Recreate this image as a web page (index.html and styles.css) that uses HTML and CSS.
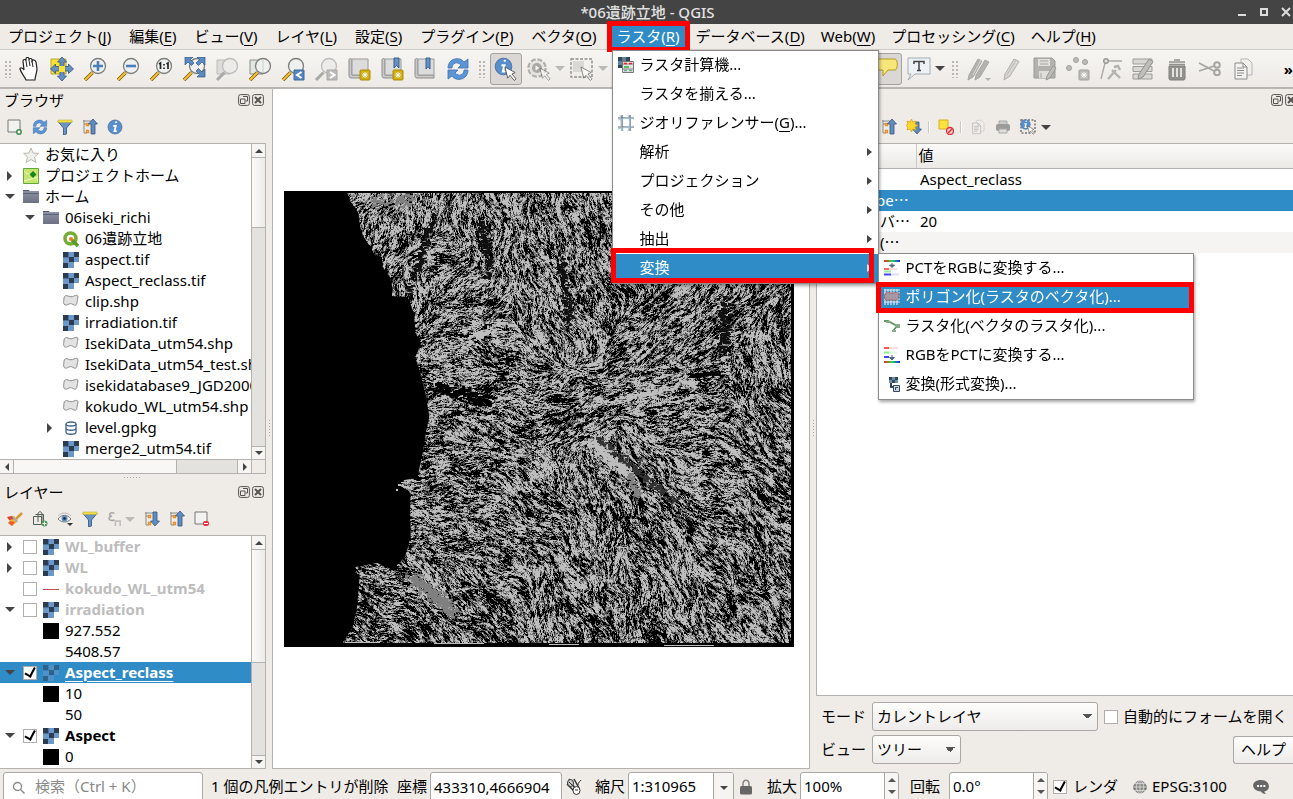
FILE: index.html
```html
<!DOCTYPE html>
<html lang="ja">
<head>
<meta charset="utf-8">
<title>*06遺跡立地 - QGIS</title>
<link rel="stylesheet" href="styles.css">
</head>
<body>
<svg class="sprite" aria-hidden="true">
  <defs>
    <linearGradient id="rainbow" x1="0" x2="1"><stop offset="0" stop-color="#f22"/><stop offset=".5" stop-color="#2d4"/><stop offset="1" stop-color="#22f"/></linearGradient>
    <linearGradient id="foldg" x1="0" y1="0" x2="0" y2="1"><stop offset="0" stop-color="#8d93a4"/><stop offset="1" stop-color="#6b7183"/></linearGradient>
  </defs>
  <symbol id="raster" viewBox="0 0 16 16"><path fill="#6c97c9" d="M0 0h16v10h-5v6H0z"/><path fill="#2b3b50" d="M0 0h5v5H0zM11 0h5v5h-5zM6 5h5v5H6zM0 11h5v5H0z"/><path fill="#4c70a0" d="M5 0h1v5H5zM0 5h6v1H0z"/></symbol>
  <symbol id="poly" viewBox="0 0 16 16"><path d="M1 4c0-2 2-3 4-2s4 1 6 0 4-1 4 1-1 3-1 5-1 4-3 3-3-2-5-1-4 2-5 0 0-3 0-6z" fill="#e2e2e2" stroke="#8c8c8c"/></symbol>
  <symbol id="folder" viewBox="0 0 16 16"><path d="M0 1h6l1 2H0z" fill="#555b6b"/><path d="M0 2h16v12H0z" fill="url(#foldg)"/><path d="M0 4.500h16" stroke="#5b6172"/></symbol>
  <symbol id="mag" viewBox="0 0 24 24"><path d="M9.500 15.500 2 23" stroke="#6e5510" stroke-width="3.400"/><path d="M9.500 15.500 2 23" stroke="#fbc02e" stroke-width="2"/><circle cx="15" cy="9" r="7.500" fill="#eef1f0" stroke="#7c7f7c" stroke-width="1.300"/></symbol>
  <symbol id="magoff" viewBox="0 0 24 24"><path d="M9.500 15.500 2 23" stroke="#a9a9a9" stroke-width="3"/><circle cx="15" cy="9" r="7.500" fill="#ecebe9" stroke="#bdbcba" stroke-width="1.300"/></symbol>
  <symbol id="refresh" viewBox="0 0 24 24"><path d="M2 11C2 1 14-1 18 5l4-3v9h-10l3-3C11 4 6 6 6 11zM22 13c0 10-12 12-16 6l-4 3v-9h10l-3 3c4 4 9 2 9-3z" fill="#5b95d6" stroke="#3b70b0" stroke-width=".8"/></symbol>
  <symbol id="funnel" viewBox="0 0 16 16"><path d="M1 2.500h14L9.500 9v6l-3 1V9z" fill="#6894c4" stroke="#41678f"/><path d="M1 1h14v2.500H1z" fill="#f2de45" stroke="#b5a53a" stroke-width=".5"/></symbol>
  <symbol id="treeup" viewBox="0 0 16 16"><path d="M2 1v13h3M2 5h3M1 2h8" stroke="#8a8a88" fill="none"/><path d="M4.500 4.500h2v2h-2zM4.500 11.500h2v2h-2z" fill="#fff" stroke="#ef8d1b" stroke-width="1.300"/><path d="m11 0 4.500 5H13v10H9V5H6.500z" fill="#5d8dc3" stroke="#35577e" stroke-width=".8"/></symbol>
  <symbol id="treedown" viewBox="0 0 16 16"><path d="M2 1v13h3M2 5h3M1 2h8" stroke="#8a8a88" fill="none"/><path d="M4.500 4.500h2v2h-2zM4.500 11.500h2v2h-2z" fill="#fff" stroke="#ef8d1b" stroke-width="1.300"/><path d="m11 15 4.500-5H13V1H9v9H6.500z" fill="#5d8dc3" stroke="#35577e" stroke-width=".8"/></symbol>
  <symbol id="info" viewBox="0 0 16 16"><circle cx="8" cy="8" r="7" fill="#5a8fcd" stroke="#44699a" stroke-width=".7"/><path d="M9 3.200h.2M7 7h1.800L7.500 12.200H9" stroke="#fff" stroke-width="1.800" stroke-linecap="round" fill="none"/></symbol>
  <symbol id="cursor" viewBox="0 0 14 16"><path d="M1 1l3 12 2.500-3 4.500 5.500 2-1.700L8.500 8.500 12 7z" fill="#fff" stroke="#555" stroke-width="1"/></symbol>
  <symbol id="float" viewBox="0 0 12 12"><rect x=".6" y=".6" width="10.800" height="10.800" rx="2" fill="none" stroke="#55534f"/><path d="M5 2.500h4.500V7H8M2.500 5H7v4.500H2.500z" fill="none" stroke="#55534f"/></symbol>
  <symbol id="close" viewBox="0 0 12 12"><rect x=".6" y=".6" width="10.800" height="10.800" rx="2" fill="none" stroke="#55534f"/><path d="m3 3 6 6m0-6-6 6" stroke="#55534f" stroke-width="2"/></symbol>
  <symbol id="star" viewBox="0 0 8 8"><path d="M4 0v8M0 4h8M1 1l6 6M7 1 1 7" stroke="#fff" stroke-width="1.300"/></symbol>
  <symbol id="scroll" viewBox="0 0 24 24"><path d="M2 3c0-2 3-2 3 0v15h16v3H4c-2 0-2-2-2-4z" fill="#c9c9c9" stroke="#8e8e8e"/><path d="M5 2h16v16H5z" fill="#dcdcdc" stroke="#9a9a9a"/></symbol>
  <symbol id="copy" viewBox="0 0 24 24"><path d="M10 2h7l4 4v12H10z" fill="#f1f0ee" stroke="#b5b5b3"/><path d="M4 6h8l4 4v12H4z" fill="#f3f2f0" stroke="#8c8c8a"/><path d="M6 11h7M6 13.500h7M6 16h7M6 18.500h5M12 6v4h4" stroke="#8c8c8a" fill="none"/></symbol>
</svg>

<header class="titlebar"><span>*06遺跡立地 - QGIS</span>
  <div class="winbtns">
    <button aria-label="最小化"><svg width="10" height="10"><path d="M1 8h8" stroke="#ddd" stroke-width="2"/></svg></button>
    <button aria-label="最大化"><svg width="10" height="10"><rect x="2" y="2" width="6" height="6" fill="none" stroke="#ddd" stroke-width="2"/></svg></button>
    <button aria-label="閉じる"><svg width="10" height="10"><path d="m1 1 8 8m0-8L1 9" stroke="#ddd" stroke-width="2"/></svg></button>
  </div>
</header>

<nav class="menubar">
  <div class="mi"><button>プロジェクト(<u>J</u>)</button></div>
  <div class="mi"><button>編集(<u>E</u>)</button></div>
  <div class="mi"><button>ビュー(<u>V</u>)</button></div>
  <div class="mi"><button>レイヤ(<u>L</u>)</button></div>
  <div class="mi"><button>設定(<u>S</u>)</button></div>
  <div class="mi"><button>プラグイン(<u>P</u>)</button></div>
  <div class="mi"><button>ベクタ(<u>O</u>)</button></div>
  <div class="mi open"><button>ラスタ(<u>R</u>)</button>
    <div class="popup main-popup">
      <button class="row"><svg class="ic" viewBox="0 0 16 16"><path fill="#31485c" d="M0 0h4v4H0zM4 4h4v4H4zM8 0h4v4H8zM0 8h4v3H0z"/><path fill="#5f8499" d="M4 0h4v4H4zM0 4h4v4H0z"/><path d="M4.500 4.500h11v11h-11z" fill="#e2e2e2" stroke="#777"/><path d="M5 7h10M5 12h10" stroke="#888"/><path d="M6 6.500h3M11 6.500h3" stroke="#e22" stroke-width="1.600"/><path d="M6 10h5" stroke="#3b3" stroke-width="1.600"/><path d="M6 13.500h3M11 13.500h3" stroke="#69a78b" stroke-width="1.500"/></svg><span>ラスタ計算機...</span></button>
      <button class="row"><i class="ic"></i><span>ラスタを揃える...</span></button>
      <button class="row"><svg class="ic" viewBox="0 0 16 16"><path d="M0 3h16M0 12h16M4 0v16M12 0v16" stroke="#5b6067" stroke-width="1.200"/><path d="M0 5c5-1 10-3 16-1M0 14c6-2 10-1 16-3M2 0c2 6 0 10 2 16M10 0c2 6 2 10 0 16" stroke="#a3c4dd" fill="none"/></svg><span>ジオリファレンサー(<u>G</u>)...</span></button>
      <button class="row"><i class="ic"></i><span>解析</span><i class="sub"></i></button>
      <button class="row"><i class="ic"></i><span>プロジェクション</span><i class="sub"></i></button>
      <button class="row"><i class="ic"></i><span>その他</span><i class="sub"></i></button>
      <button class="row"><i class="ic"></i><span>抽出</span><i class="sub"></i></button>
      <div class="subhost">
        <button class="row on mark-a"><i class="ic"></i><span>変換</span><i class="sub"></i></button>
        <div class="popup sub-popup">
          <button class="row"><svg class="ic" viewBox="0 0 16 16"><path d="M0 0h16v2H0z" fill="url(#rainbow)"/><path d="M0 8h5v2H0z" fill="#f66"/><path d="M5 8h8v2H5z" fill="#fdd"/><path d="M0 10.500h7v2H0z" fill="#9e9"/><path d="M0 13.500h7v2H0z" fill="#44f"/><path d="M7 13.500h8v2H7z" fill="#ddf"/><path d="M8 3v3M5.500 5h5L8 7.500z" stroke="#4d6c86" fill="#4d6c86"/></svg><span>PCTをRGBに変換する...</span></button>
          <button class="row on mark-b"><svg class="ic" viewBox="0 0 16 16"><path d="M1 0v16M4 0v16M7 0v16M10 0v16M13 0v16M0 1h16M0 4h16M0 7h16M0 10h16M0 13h16" stroke="#dce6ee" stroke-width="1.200"/><path d="M1 5c3-4 5 0 8-1s7-1 6 3-3 5-6 4-5 1-7 0-2-3-1-6z" fill="#a98f98" opacity=".85" stroke="#a55"/></svg><span>ポリゴン化(ラスタのベクタ化)...</span></button>
          <button class="row"><svg class="ic" viewBox="0 0 16 16"><path d="M0 3h4l9 5-4 5" fill="none" stroke="#5f9766" stroke-width="1.800"/><path d="M2 3h4v2H2zM11 6h5v4h-3zM8 12h4v2H8z" fill="#86aa8a"/></svg><span>ラスタ化(ベクタのラスタ化)...</span></button>
          <button class="row"><svg class="ic" viewBox="0 0 16 16"><path d="M0 14h16v2H0z" fill="url(#rainbow)"/><path d="M0 0h5v2H0z" fill="#f55"/><path d="M5 0h9v2H5z" fill="#fdd"/><path d="M0 4.500h5v2H0z" fill="#8e8"/><path d="M5 4.500h8v2H5z" fill="#dfd"/><path d="M0 9h5v2H0z" fill="#44f"/><path d="M8 8v3M5.500 10.500h5L8 13z" stroke="#4d6c86" fill="#4d6c86"/></svg><span>RGBをPCTに変換する...</span></button>
          <button class="row"><svg class="ic" viewBox="0 0 16 16"><path d="M5 1h9v6H5z" fill="#7390a3"/><path d="M5 1h3v3H5zM11 1h3v3h-3zM8 4h3v3H8z" fill="#31485c"/><path d="M7 7v4h3" stroke="#31485c" fill="none" stroke-width="2"/><path d="M9.500 9.500h6v6h-6z" fill="#cbd6dc" stroke="#31485c"/><path d="M11.500 14v-2.500H14" stroke="#31485c" fill="none"/></svg><span>変換(形式変換)...</span></button>
        </div>
      </div>
    </div>
  </div>
  <div class="mi"><button>データベース(<u>D</u>)</button></div>
  <div class="mi"><button>Web(<u>W</u>)</button></div>
  <div class="mi"><button>プロセッシング(<u>C</u>)</button></div>
  <div class="mi"><button>ヘルプ(<u>H</u>)</button></div>
</nav>

<div class="toolbar">
  <i class="handle"></i>
  <button class="tool"><svg viewBox="0 0 24 24"><path d="M9 23c-1-3-5-7-6-11 0-2 3-1 4 1L6 4c0-2 3-2 3 0V2c0-2 3-2 3 0v1c0-2 3-2 3 0v1c1-1.500 3-1.500 4 1l1 7c0 4-2 7-2 11z" fill="#fff" stroke="#222" stroke-width="1.200"/><path d="m9 4 1 6M12 3l1 6M15 4l1 6" stroke="#222"/></svg></button>
  <button class="tool"><svg viewBox="0 0 24 24"><path d="M1 2h15v15H1z" fill="#f9e32f" stroke="#b8a636"/><path d="m12 0 4.500 5H14v4.500h4.500V7L23.500 12 18.500 16.500V14H14v5h2.500L12 24l-4.500-5H10v-5H5.500v2.500L.5 12l5-5v2.500H10V5H7.500z" fill="#6490c4" stroke="#35577e" stroke-width=".8"/><path d="M9 9h6v6H9z" fill="#f9e32f"/></svg></button>
  <button class="tool"><svg viewBox="0 0 24 24"><use href="#mag"/><path d="M15 4v10M10 9h10" stroke="#4b7fbd" stroke-width="2.600"/></svg></button>
  <button class="tool"><svg viewBox="0 0 24 24"><use href="#mag"/><path d="M10 9h10" stroke="#4b7fbd" stroke-width="2.600"/></svg></button>
  <button class="tool"><svg viewBox="0 0 24 24"><use href="#mag"/><path d="m10 7 1.500-1V12M15 7v1.500M15 10.500V12M17.500 7 19 6V12" stroke="#222" stroke-width="1.700" fill="none"/></svg></button>
  <button class="tool"><svg viewBox="0 0 24 24"><use href="#mag"/><path d="M3 0h8L8.500 2.500 12 6 9.500 8.500 6 5 3 8zM23 0v8l-3-3-3.500 3.500L14 6l3.500-3.500L15 0zM23 20h-8l2.500-2.500L14 14l2.500-2.500L20 15l3-3z" fill="#5a8ac0" stroke="#35577e" stroke-width=".7"/></svg></button>
  <button class="tool"><svg viewBox="0 0 24 24"><path d="M2 3h13v14H2z" fill="#dddcda" stroke="#bbb"/><use href="#magoff"/></svg></button>
  <button class="tool"><svg viewBox="0 0 24 24"><path d="M2 3h13v14H2z" fill="#e2e6e2" stroke="#899189"/><use href="#mag"/><path d="M15 2v14" stroke="#c9cfca"/></svg></button>
  <button class="tool"><svg viewBox="0 0 24 24"><use href="#mag"/><path d="M13 13h10v10H13z" fill="#5787bf" stroke="#3f6998"/><path d="m20.500 15-4.500 3 4.500 3" stroke="#fff" stroke-width="2" fill="none"/></svg></button>
  <button class="tool"><svg viewBox="0 0 24 24"><use href="#magoff"/><path d="M13 13h10v10H13z" fill="#bdbcba" stroke="#a8a7a5"/><path d="m16 15 4.500 3-4.500 3" stroke="#fff" stroke-width="2" fill="none"/></svg></button>
  <button class="tool"><svg viewBox="0 0 24 24"><use href="#scroll"/><rect x="13" y="13" width="10" height="10" rx="1" fill="#d2ae10" stroke="#a98b08"/><use href="#star" x="15" y="15" width="6" height="6"/></svg></button>
  <button class="tool"><svg viewBox="0 0 24 24"><use href="#scroll"/><path d="M14 1h5v10l-2.500-2.500L14 11z" fill="#6592c7" stroke="#3a5e8b"/><rect x="13" y="13" width="10" height="10" rx="1" fill="#d2ae10" stroke="#a98b08"/><use href="#star" x="15" y="15" width="6" height="6"/></svg></button>
  <button class="tool"><svg viewBox="0 0 24 24"><use href="#scroll"/><path d="M13 1h4v11l-2-2.500-2 2.500z" fill="#6592c7" stroke="#3a5e8b"/></svg></button>
  <button class="tool"><svg viewBox="0 0 24 24"><use href="#refresh"/></svg></button>
  <i class="handle"></i>
  <button class="tool pressed"><svg viewBox="0 0 24 24"><use href="#info" x="0" y="0" width="19" height="19"/><use href="#cursor" x="10" y="9" width="13" height="15"/></svg></button>
  <button class="tool"><svg viewBox="0 0 24 24"><circle cx="10" cy="11" r="8.500" fill="none" stroke="#b2b0ad" stroke-width="2.500" stroke-dasharray="5 1.700"/><circle cx="10" cy="11" r="7.500" fill="#e6e4e1"/><circle cx="10" cy="11" r="5" fill="#aaa8a5"/><path d="m8.500 8.500 4 2.500-4 2.500z" fill="#fff"/><use href="#cursor" x="12" y="10" width="12" height="14" opacity=".6"/></svg></button><i class="drop off"></i>
  <button class="tool"><svg viewBox="0 0 24 24"><path d="M1 2h21v18H1z" fill="none" stroke="#908e8b" stroke-width="1.400" stroke-dasharray="3 1.500"/><path d="M3 4h11v11H3z" fill="#d9d8d5"/><use href="#cursor" x="10" y="9" width="13" height="15" opacity=".7"/></svg></button><i class="drop off"></i>
  <div class="right-tools">
    <button class="tool pressed"><svg viewBox="0 0 24 24"><path d="M3 2h18c3 0 3 11 0 11h-7l-5 6v-6H3z" fill="#f9e67a" stroke="#b39a20"/></svg></button>
    <button class="tool"><svg viewBox="0 0 24 24"><path d="M1 1h22v16H8l-7 6 3-6H1z" fill="#edf2f6" stroke="#a1abb3"/><path d="M7 7V4.500h10V7M12 4.500v9M10 13.500h4" stroke="#444" stroke-width="1.500" fill="none"/></svg></button><i class="drop"></i>
    <i class="handle"></i>
    <button class="tool off"><svg viewBox="0 0 24 24"><path d="m2 18 9-16 4 2-9 16-5 3zM9 18l9-15 4 2-9 15-5 3z" fill="#aaa8a5" stroke="#a09e9b"/><path d="m6 18 8-15" stroke="#d5d3d0"/><path d="M18 21h6l-3 3z" fill="#aaa"/></svg></button>
    <button class="tool off"><svg viewBox="0 0 24 24"><path d="m5 17 9-15 5 2.500L10 19l-6 4z" fill="#d4d2cf" stroke="#a7a5a2"/><path d="m7 18 9-15" stroke="#b7b5b2"/></svg></button>
    <button class="tool off"><svg viewBox="0 0 24 24"><path d="M1 1h18l3 3v17H1z" fill="#aaa8a5" stroke="#8e8c89"/><path d="M5 2h12v7H5zM6 14h11v7H6z" fill="#dedcd9"/><path d="M7 4h8M7 7h8M8 16v5" stroke="#999"/><path d="m14 19 6-10 3 2-6 10-4 2z" fill="#b7b5b2" stroke="#8e8c89"/></svg></button>
    <button class="tool off"><svg viewBox="0 0 24 24"><g fill="#b5b3b0" stroke="#93918e"><circle cx="10" cy="3" r="2.500"/><circle cx="19" cy="5" r="2.500"/><circle cx="3" cy="11" r="2.500"/><rect x="13" y="13" width="10" height="10" rx="1"/></g><use href="#star" x="15" y="15" width="6" height="6"/></svg></button>
    <button class="tool off"><svg viewBox="0 0 24 24"><path d="M7 4h16M6 6 2 22" stroke="#a09e9b" stroke-width="1.400"/><circle cx="7" cy="4" r="2.300" fill="#ddd" stroke="#8d8b88" stroke-width="1.500"/><path d="m9 22 8-9M13 13l8 8M15 10l4-1 2 4" stroke="#aaa8a5" stroke-width="2.400" fill="none"/></svg></button>
    <button class="tool off"><svg viewBox="0 0 24 24"><path d="M1 2h19v5H1zM1 9.500h19v5H1zM1 17h19v5H1z" fill="#d5d3d0" stroke="#918f8c"/><path d="m7 17 10-15 4 2.500L11 20l-5 2z" fill="#b8b6b3" stroke="#858380"/></svg></button>
    <button class="tool"><svg viewBox="0 0 24 24"><path d="M4 9h16v12c0 2-1 2-2 2H6c-1 0-2 0-2-2z" fill="#93918e" stroke="#807e7b"/><path d="M4 5h16M4 7.500h16M9 3h6" stroke="#93918e" stroke-width="1.400"/><path d="M8 11v9M12 11v9M16 11v9" stroke="#e3e1de" stroke-width="2"/></svg></button>
    <button class="tool off"><svg viewBox="0 0 24 24"><path d="m1 6 15 8M1 14l15-5" stroke="#9b9996" stroke-width="1.800"/><circle cx="19" cy="8" r="2.800" fill="none" stroke="#9b9996" stroke-width="2"/><circle cx="19" cy="15.500" r="2.800" fill="none" stroke="#9b9996" stroke-width="2"/></svg></button>
    <button class="tool"><svg viewBox="0 0 24 24"><use href="#copy"/></svg></button>
    <button class="more">»</button>
  </div>
</div>

<main class="work">
  <aside class="left">
    <section class="dock browser">
      <div class="dock-title"><h2>ブラウザ</h2><svg width="12" height="12"><use href="#float"/></svg><svg width="12" height="12"><use href="#close"/></svg></div>
      <div class="dock-tools">
        <button><svg viewBox="0 0 16 16"><path d="M1 1h12v12H1z" fill="#f2f2f0" stroke="#777"/><circle cx="12" cy="13" r="2.200" fill="#fff" stroke="#3d8d4e" stroke-width="1.500"/></svg></button>
        <button><svg viewBox="0 0 24 24"><use href="#refresh"/></svg></button>
        <button><svg><use href="#funnel"/></svg></button>
        <button><svg><use href="#treeup"/></svg></button>
        <button><svg><use href="#info"/></svg></button>
      </div>
      <div class="view">
        <div class="view-row">
        <ul class="tree">
          <li><i class="tw"></i><svg><path d="m8 1 2 5 5.500.3-4 3.700 1.500 5.500-5-3-5 3L4.500 10 .5 6.300 6 6z" fill="#f0f0ea" stroke="#b9b9ae"/></svg>お気に入り</li>
          <li><i class="tw shut"></i><svg><path d="M.5.500h15v15H.5z" fill="#c6e56e" stroke="#63a63a"/><path d="M1 3c4 5 10 2 14 10M1 13 15 9" stroke="#effbc0" fill="none"/><path d="m10 3 3.500 3.500L10 10 6.500 6.500z" fill="#15851a"/></svg>プロジェクトホーム</li>
          <li><i class="tw down"></i><svg><use href="#folder"/></svg>ホーム</li>
          <li class="l1"><i class="tw down"></i><svg><use href="#folder"/></svg>06iseki_richi</li>
          <li class="l2"><i class="tw"></i><svg><circle cx="7.500" cy="7.500" r="5.500" fill="#fff" stroke="#76ac36" stroke-width="3.500"/><path d="m9 9 6 6" stroke="#5c9b2a" stroke-width="3.500"/><circle cx="8" cy="8" r="2" fill="#ee7913"/></svg>06遺跡立地</li>
          <li class="l2"><i class="tw"></i><svg><use href="#raster"/></svg>aspect.tif</li>
          <li class="l2"><i class="tw"></i><svg><use href="#raster"/></svg>Aspect_reclass.tif</li>
          <li class="l2"><i class="tw"></i><svg><use href="#poly"/></svg>clip.shp</li>
          <li class="l2"><i class="tw"></i><svg><use href="#raster"/></svg>irradiation.tif</li>
          <li class="l2"><i class="tw"></i><svg><use href="#poly"/></svg>IsekiData_utm54.shp</li>
          <li class="l2"><i class="tw"></i><svg><use href="#poly"/></svg>IsekiData_utm54_test.shp</li>
          <li class="l2"><i class="tw"></i><svg><use href="#poly"/></svg>isekidatabase9_JGD2000</li>
          <li class="l2"><i class="tw"></i><svg><use href="#poly"/></svg>kokudo_WL_utm54.shp</li>
          <li class="l2"><i class="tw shut"></i><svg><path d="M3 4v8c0 3 10 3 10 0V4M3 8c0 3 10 3 10 0" fill="#fff" stroke="#3f6386" stroke-width="1.300"/><ellipse cx="8" cy="4" rx="5" ry="2" fill="#fff" stroke="#3f6386" stroke-width="1.300"/></svg>level.gpkg</li>
          <li class="l2"><i class="tw"></i><svg><use href="#raster"/></svg>merge2_utm54.tif</li>
        </ul>
        <div class="sb"><i class="cap up"></i><i class="thumb t1"></i><i class="track"></i><i class="cap dn"></i></div>
        </div>
        <div class="hsb"><i class="cap lf"></i><i class="thumb"></i><i class="track"></i><i class="cap rt"></i><i class="corner"></i></div>
      </div>
    </section>
    <div class="split-h"><i></i></div>
    <section class="dock layers">
      <div class="dock-title"><h2>レイヤー</h2><svg width="12" height="12"><use href="#float"/></svg><svg width="12" height="12"><use href="#close"/></svg></div>
      <div class="dock-tools">
        <button><svg viewBox="0 0 16 16"><path d="m1 6 6-1 4 5-6 5z" fill="#f4b32a"/><path d="m0 6 5-1 2 3-5 1z" fill="#d94330"/><path d="m3 10 5 1-3 4-4-3z" fill="#ef5b2f"/><path d="m9 8 6-6" stroke="#d29a35" stroke-width="2.500"/><path d="m6 6 4 5" stroke="#83b4df" stroke-width="1.500"/></svg></button>
        <button><svg viewBox="0 0 16 16"><path d="M1.500 5.500h8v8h-8zM3.500 3.500h8v8M6 11V3c0-3 4-3 4 0v9" fill="none" stroke="#555e55"/><circle cx="12.500" cy="12.500" r="3" fill="#489a58"/><path d="M10.500 12.500h4M12.500 10.500v4" stroke="#fff"/></svg></button>
        <button><svg viewBox="0 0 16 16"><path d="M1 8c4-5 9-5 13 0-4 4-9 4-13 0z" fill="#f6f6f6" stroke="#777"/><circle cx="7.500" cy="7.500" r="3" fill="#5a8ac0"/><circle cx="7.500" cy="7.500" r="1.300" fill="#223"/><path d="M1 5c4-4 9-4 13 0" stroke="#bbb" fill="none"/><path d="M10 12h6l-3 3z" fill="#333"/></svg></button>
        <button><svg><use href="#funnel"/></svg></button>
        <button class="wide"><svg viewBox="0 0 16 16"><path d="M8 2C3 0 1 4 5 5 0 6 2 11 8 9" stroke="#a9a7a4" stroke-width="1.700" fill="none"/><path d="M9 14v-4h5v4M9 12.500v3M14 12.500v3" stroke="#bdbbb8" stroke-width="1.600" fill="none"/></svg><i class="drop off"></i></button>
        <button><svg><use href="#treedown"/></svg></button>
        <button><svg><use href="#treeup"/></svg></button>
        <button><svg viewBox="0 0 16 16"><path d="M1 1h12v12H1z" fill="#f2f2f0" stroke="#777"/><rect x="9" y="10" width="6" height="5" rx="2" fill="#e4343f"/><path d="M10 12.500h4" stroke="#fff"/></svg></button>
      </div>
      <div class="view">
        <div class="view-row">
        <ul class="tree lay">
          <li class="dim"><i class="tw shut"></i><label><input type="checkbox"><svg><use href="#raster"/></svg>WL_buffer</label></li>
          <li class="dim"><i class="tw shut"></i><label><input type="checkbox"><svg><use href="#raster"/></svg>WL</label></li>
          <li class="dim"><i class="tw"></i><label><input type="checkbox"><svg><path d="M0 8.500h16" stroke="#c0504d"/></svg>kokudo_WL_utm54</label></li>
          <li class="dim"><i class="tw down"></i><label><input type="checkbox"><svg><use href="#raster"/></svg>irradiation</label></li>
          <li class="val"><b class="sw"></b>927.552</li>
          <li class="val"><b class="sw none"></b>5408.57</li>
          <li class="sel"><i class="tw down"></i><label><input type="checkbox" checked><svg class="fade"><use href="#raster"/></svg><u>Aspect_reclass</u></label></li>
          <li class="val"><b class="sw"></b>10</li>
          <li class="val"><b class="sw none"></b>50</li>
          <li class="strong"><i class="tw down"></i><label><input type="checkbox" checked><svg><use href="#raster"/></svg>Aspect</label></li>
          <li class="val"><b class="sw"></b>0</li>
        </ul>
        <div class="sb"><i class="cap up"></i><i class="thumb t2"></i><i class="track"></i><i class="cap dn"></i></div>
        </div>
      </div>
    </section>
  </aside>
  <div class="split-v"><i></i></div>
  <section class="map"><canvas id="terrain" width="510" height="456"></canvas></section>
  <div class="split-v"><i></i></div>
  <aside class="right">
    <div class="dock-title"><h2></h2><svg width="12" height="12"><use href="#float"/></svg><svg width="12" height="12"><use href="#close"/></svg></div>
    <div class="dock-tools id-tools">
      <button><svg><use href="#treeup"/></svg></button>
      <button><svg viewBox="0 0 16 16"><path d="m11 15 4.500-5H13V3H9v7H6.500z" fill="#5d8dc3" stroke="#35577e" stroke-width=".8"/><path d="m5.500 0 1.300 3L10 2 9 5l3 1.500L9 8l1 3-3.200-1-1.300 3-1.300-3L1 11l1-3-2-1.500L2 5 1 2l3.200 1z" fill="#fcd72c" stroke="#d79d12" stroke-width=".7"/></svg></button>
      <i class="sep"></i>
      <button><svg viewBox="0 0 16 16"><path d="M1 1h9v9H1z" fill="#fbe33b" stroke="#d0ae26"/><circle cx="12" cy="12" r="3.500" fill="#f7c9ca" stroke="#d9333f" stroke-width="1.300"/><path d="m10 14 4-4" stroke="#d9333f" stroke-width="1.500"/></svg></button>
      <i class="sep"></i>
      <button class="pale"><svg viewBox="0 0 24 24"><use href="#copy"/></svg></button>
      <button><svg viewBox="0 0 16 16"><path d="M4 2h8v4H4z" fill="#ccc" stroke="#aaa"/><rect x="1" y="5" width="14" height="7" rx="2" fill="#9d9b98"/><path d="M4 10h8v4H4z" fill="#deddda" stroke="#aaa"/></svg></button>
      <button><svg viewBox="0 0 16 16"><path d="M1 1h14v13H1z" fill="none" stroke="#777" stroke-dasharray="2 1.500" stroke-width="1.500"/><use href="#info" width="11" height="11"/><use href="#cursor" x="7" y="6" width="8" height="10"/></svg></button>
      <i class="drop"></i>
    </div>
    <div class="results">
      <table>
        <thead><tr><th></th><th>値</th></tr></thead>
        <tbody>
          <tr><td></td><td>Aspect_reclass</td></tr>
          <tr class="sel"><td>pe⋯</td><td></td></tr>
          <tr><td>バ⋯</td><td>20</td></tr>
          <tr class="alt"><td>(⋯</td><td></td></tr>
        </tbody>
      </table>
    </div>
    <div class="form">
      <label for="mode">モード</label>
      <select id="mode" class="wide-select"><option>カレントレイヤ</option></select>
      <label class="auto"><input type="checkbox">自動的にフォームを開く</label>
    </div>
    <div class="form last">
      <label for="viewsel">ビュー</label>
      <select id="viewsel"><option>ツリー</option></select>
      <button class="help">ヘルプ</button>
    </div>
  </aside>
</main>

<footer class="status">
  <div class="search"><svg width="14" height="14"><circle cx="5.500" cy="5.500" r="4" fill="none" stroke="#888" stroke-width="1.300"/><path d="m8.500 8.500 4 4" stroke="#888" stroke-width="1.500"/></svg><input type="text" aria-label="検索" placeholder="検索（Ctrl + K）"></div>
  <span class="msg">1 個の凡例エントリが削除</span>
  <label for="coord">座標</label><input id="coord" class="coord" type="text" value="433310,4666904">
  <button class="mouse" aria-label="範囲"><svg width="16" height="18" viewBox="0 0 16 18"><path d="m3 1 9 14M1 6l9 9M8 1l5 9" stroke="#333" stroke-width="1.500"/><ellipse cx="10.500" cy="12.500" rx="3.500" ry="4" fill="#fff" stroke="#333"/><ellipse cx="4.500" cy="5" rx="3" ry="3.500" fill="#ccc" stroke="#333"/><path d="M12 7c0-3 2-3 3-5M3 4l3 3M9 12h3" stroke="#333" fill="none"/></svg></button>
  <label for="scale">縮尺</label>
  <div class="combo"><input id="scale" type="text" value="1:310965"><button aria-label="縮尺一覧"><i class="drop"></i></button></div>
  <button class="lock" aria-label="縮尺を固定"><svg width="12" height="16"><path d="M3 8V5c0-5 6-5 6 0v3" fill="none" stroke="#888" stroke-width="1.500"/><rect y="7" width="12" height="8.500" rx="1.500" fill="#666"/></svg></button>
  <label for="zoom">拡大</label>
  <div class="spin"><input id="zoom" type="text" value="100%"><span class="steps"><i class="s-up"></i><i class="s-dn"></i></span></div>
  <label for="rot">回転</label>
  <div class="spin"><input id="rot" type="text" value="0.0°"><span class="steps"><i class="s-up"></i><i class="s-dn"></i></span></div>
  <label class="render"><input type="checkbox" checked>レンダ</label>
  <button class="crs"><svg width="16" height="16"><path d="M8 1 15 7v3l-7 5-7-5V7z" fill="#8b8b89"/><circle cx="8" cy="8" r="6" fill="none" stroke="#777"/><path d="M1 8h14M3 4.500h10M3 11.500h10M8 1v14M8 1C3 5 3 11 8 15M8 1c5 4 5 10 0 14" stroke="#ddd" stroke-width=".8" fill="none"/></svg>EPSG:3100</button>
  <button class="bubble" aria-label="メッセージ"><svg width="16" height="16"><path d="M8 1c10 0 10 11 3 11.500L13 15c-3 0-4-1-5-2.500C-2.500 12-2.500 1 8 1z" fill="#666"/><path d="M4 7h2M7.200 7h2M10.400 7h2" stroke="#fff" stroke-width="2"/></svg></button>
</footer>
<script src="terrain.js"></script>
</body>
</html>
```
FILE: styles.css
```css
* { box-sizing: border-box; }
html, body { height: 100%; }
body { margin: 0; display: flex; flex-direction: column; overflow: hidden; background: #efebe7; color: #000; font: 15px/21px "Noto Sans", "Noto Sans CJK JP", sans-serif; }
button, input, select { font: inherit; color: inherit; margin: 0; }
button { background: none; border: 0; padding: 0; white-space: nowrap; }
i { font-style: normal; }
u { text-decoration-thickness: 1px; text-underline-offset: 3px; }
.sprite { position: absolute; width: 0; height: 0; }

.titlebar { flex: none; height: 24px; display: flex; align-items: center; background: #444; color: #e2e2e2; font-weight: 500; padding-right: 2px; }
.titlebar > span { flex: 1; text-align: center; padding-left: 58px; }
.winbtns { display: flex; gap: 12px; }
.winbtns button, .winbtns svg { display: block; }

.menubar { flex: none; height: 26px; display: flex; align-items: center; padding-left: 1px; border-bottom: 1px solid #cfccc8; }
.mi { position: relative; white-space: nowrap; margin-right: 4px; }
.mi > button { height: 21px; line-height: 21px; padding: 0 7px; display: block; }
.mi.open { z-index: 10; margin-right: 0; }
.mi.open ~ .mi { margin-right: 2px; }
.mi.open > button { background: #308cc6; color: #fff; padding: 0 5px; outline: 5px solid #f00; margin: 0 4px; }
.popup { position: absolute; background: #fff; border: 1px solid #8e8c8a; box-shadow: 1px 2px 3px rgba(0,0,0,.35); }
.main-popup { top: 24px; left: 4px; width: 267px; }
.row { width: 100%; height: 29px; display: flex; align-items: center; gap: 6px; padding: 0 6px 2px 5px; text-align: left; position: relative; line-height: 27px; }
.row .ic { width: 16px; height: 16px; flex: none; }
.row span { flex: 1; }
.row.on { background: #308cc6; color: #fff; }
.sub { border: 4px solid transparent; border-left: 5px solid #444; border-right: 0; }
.on .sub { border-left-color: #d6e6f2; }
.subhost { position: relative; }
.sub-popup { left: 265px; top: -1px; width: 316px; }
.row.on::after { content: ""; position: absolute; border: 5px solid #f00; z-index: 3; }
.row.mark-a::after { inset: -6px 4px 0 -2px; }
.row.mark-b::after { inset: -1px -1px -1px -3px; }

.toolbar { flex: none; height: 39px; display: flex; align-items: center; gap: 1px; padding-left: 4px; border-bottom: 2px solid #b8b5b2; background: linear-gradient(#f7f5f2, #edeae6); }
.handle { width: 8px; height: 18px; flex: none; background: radial-gradient(circle, #bbb8b4 1px, transparent 1px) 0 0 / 4px 4px; }
.tool + .handle { margin: 0 3px 0 3px; }
.drop + .handle { margin: 0 3px 0 5px; }
.tool { width: 32px; height: 32px; flex: none; display: flex; align-items: center; justify-content: center; border-radius: 3px; }
.tool svg { width: 24px; height: 24px; }
.pressed { background: #dad7d4; border: 1px solid #a5a29f; }
.drop { flex: none; border: 5px solid transparent; border-top: 5px solid #444; border-bottom: 0; width: 10px; }
.drop.off { border-top-color: #bbb9b6; }
.tool.off { opacity: .85; }
.tool + .drop { margin-left: -1px; }
.right-tools { margin-left: auto; display: flex; align-items: center; gap: 1px; }
.more { margin-left: 24px; font-weight: 700; height: 24px; line-height: 20px; }

.work { flex: 1; min-height: 0; display: flex; }
.left { flex: none; width: 266px; display: flex; flex-direction: column; }
.dock-title { height: 22px; flex: none; display: flex; align-items: center; gap: 2px; padding: 0 2px 0 4px; }
.dock-title h2 { margin: 0; flex: 1; font-size: 15px; font-weight: 400; }
.dock-tools { height: 32px; flex: none; display: flex; align-items: center; gap: 9px; padding-left: 7px; }
.dock-tools button, .dock-tools svg { display: block; width: 16px; height: 16px; }
.dock-tools .wide { display: flex; width: 28px; gap: 3px; align-items: center; }
.dock-tools .drop { width: 10px; }
.browser { flex: none; }
.view { border: 1px solid #b4b1ae; border-left: 0; background: #fff; display: flex; flex-direction: column; overflow: hidden; }
.view-row { display: flex; flex: 1; min-height: 0; }
.tree { list-style: none; margin: 0; padding: 0; flex: 1; min-width: 0; overflow: hidden; }
.tree li { height: 21px; display: flex; align-items: center; white-space: nowrap; padding-left: 3px; }
.tree svg { width: 16px; height: 16px; flex: none; margin-right: 6px; }
.tree .tw { width: 20px; flex: none; height: 10px; display: flex; align-items: center; }
.tw.shut::before { content: ""; margin-left: 4px; border: 5px solid transparent; border-left: 5px solid #444; border-right: 0; }
.tw.down::before { content: ""; margin-left: 2px; border: 5px solid transparent; border-top: 5px solid #444; border-bottom: 0; }
.tree li.l1 { padding-left: 23px; }
.tree li.l2 { padding-left: 43px; }
.tree label { display: flex; align-items: center; }
input[type=checkbox] { appearance: none; width: 14px; height: 14px; flex: none; background: #fff; border: 1px solid #b1aeab; display: grid; place-items: center; }
input[type=checkbox]:checked::before { content: ""; width: 5px; height: 9px; border: solid #000; border-width: 0 2px 2px 0; transform: rotate(28deg) translate(-1px, -1px); }
.tree input { margin: 0 6px 0 0; }
.dim { color: #bdbdbd; font-weight: 700; }
.strong { font-weight: 700; }
.tree .sel { background: #308cc6; color: #fff; font-weight: 700; }
.fade { opacity: .5; }
.tree li.val { padding-left: 43px; }
.sw { width: 16px; height: 16px; background: #000; margin-right: 6px; flex: none; }
.sw.none { background: none; }
.sb { width: 14px; flex: none; border-left: 1px solid #b4b1ae; display: flex; flex-direction: column; }
.cap { flex: none; width: 13px; height: 13px; display: grid; place-items: center; background: #f6f5f3; }
.cap::before { content: ""; border: 4px solid transparent; }
.up::before { border-bottom: 4px solid #444; border-top: 0; }
.dn::before { border-top: 4px solid #444; border-bottom: 0; }
.lf::before { border-right: 4px solid #444; border-left: 0; }
.rt::before { border-left: 4px solid #444; border-right: 0; }
.thumb { background: linear-gradient(90deg, #fbfaf9, #eeecea); border: 0 solid #b4b1ae; }
.track { background: #e3e2df; flex: 1; }
.sb .thumb { border-width: 1px 0; }
.t1 { height: 71px; }
.t2 { height: 114px; }
.sb .dn { border-top: 1px solid #b4b1ae; }
.hsb { height: 14px; flex: none; border-top: 1px solid #b4b1ae; display: flex; }
.hsb .thumb { border-width: 0 1px; width: 164px; background: #f8f7f5; }
.hsb .rt, .hsb .corner { border-left: 1px solid #b4b1ae; width: 14px; }
.hsb .corner { background: #efebe7; }
.split-h { height: 7px; flex: none; display: grid; place-items: center; }
.split-h i { width: 18px; height: 1px; background: repeating-linear-gradient(90deg, #aaa 0 1px, transparent 1px 3px); }
.layers { flex: 1; min-height: 0; display: flex; flex-direction: column; }
.layers .view { flex: 1; min-height: 0; }
.split-v { width: 6px; flex: none; display: grid; place-items: center; }
.split-v i { height: 18px; width: 1px; background: repeating-linear-gradient(#aaa 0 1px, transparent 1px 3px); }
.map { flex: 1; min-width: 0; background: #fff; border: 1px solid #b4b1ae; border-top: 0; padding: 102px 15px 0 11px; }
.map canvas { display: block; width: 100%; }

.right { flex: none; width: 477px; display: flex; flex-direction: column; }
.right > .dock-title { padding-right: 0; margin-right: -4px; }
.id-tools { padding-left: 65px; }
.id-tools .drop { margin-left: -4px; }
.sep { width: 2px; height: 12px; margin: 0 -3px; border-left: 1px solid #c9c6c3; border-right: 1px solid #fff; }
.id-tools .sep + button { margin-left: 2px; }
.pale { opacity: .6; }
.results { flex: 1; min-height: 0; background: #fff; border: 1px solid #b4b1ae; border-right: 0; }
table { width: 100%; border-collapse: collapse; table-layout: fixed; }
th { height: 24px; padding: 0 2px; font-weight: 400; text-align: left; background: linear-gradient(#fbfaf8, #ebe9e6); border-bottom: 1px solid #b4b1ae; }
th:first-child { width: 99px; border-right: 1px solid #ccc9c5; }
td { height: 21px; padding: 0 4px; white-space: nowrap; }
td:first-child { padding: 0 0 0 63px; }
.right .sel { background: #308cc6; color: #fff; }
.right .sel td:first-child { padding-left: 59px; }
.alt { background: #f5f4f2; }
.form { flex: none; display: flex; align-items: center; padding: 6px 0 0 5px; gap: 6px; }
.form label:first-child { width: 45px; }
.form.last { padding: 4px 0 5px 5px; }
select { appearance: none; height: 29px; width: 89px; padding: 0 4px; border: 1px solid #aaa7a4; border-radius: 3px; background: linear-gradient(225deg, transparent 50%, #555 50%) right 10px center / 5px 5px no-repeat, linear-gradient(135deg, transparent 50%, #555 50%) right 5px center / 5px 5px no-repeat, linear-gradient(#fdfdfc, #eeecea); background: linear-gradient(45deg, transparent 50%, #555 50%) right 10px center / 5px 5px no-repeat, linear-gradient(315deg, transparent 50%, #555 50%) right 5px center / 5px 5px no-repeat, linear-gradient(#fdfdfc, #eeecea); }
.wide-select { width: 226px; }
.auto { display: flex; align-items: center; gap: 5px; white-space: nowrap; }
.help { margin-left: auto; height: 28px; padding: 0 7px; border: 1px solid #aaa7a4; border-right: 0; border-radius: 3px 0 0 3px; background: linear-gradient(#fdfdfc, #eeecea); }

.status { flex: none; height: 30px; padding: 3px 0 0 3px; display: flex; align-items: flex-start; overflow: hidden; line-height: 29px; white-space: nowrap; }
.status svg { display: block; }
.status > button { height: 29px; display: flex; align-items: center; }
.search, .combo, .spin, .coord { height: 31px; display: flex; border: 1px solid #aaa7a4; border-radius: 3px; background: #fff; overflow: hidden; flex: none; }
.search { width: 200px; align-items: center; padding-left: 8px; gap: 6px; }
.status input[type=text] { border-width: 0; background: transparent; padding: 0 3px 2px; min-width: 0; }
.search input { flex: 1; }
.search input::placeholder { color: #888; opacity: 1; }
.status input.coord { border: 1px solid #aaa7a4; background: #fff; width: 132px; }
.msg { width: 186px; margin: 0 0 0 8px; overflow: hidden; }
.status label { width: 33px; }
.mouse { width: 33px; padding-left: 4px; }
.combo { width: 106px; }
.combo input { flex: 1; }
.combo button { width: 20px; border-left: 1px solid #aaa7a4; display: grid; place-items: center; background: #f5f4f2; }
.combo .drop { border-width: 4px 4px 0; width: 8px; }
.lock { width: 33px; padding-left: 6px; }
.spin { width: 99px; }
.spin input { flex: 1; }
.steps { width: 14px; border-left: 1px solid #aaa7a4; display: flex; flex-direction: column; align-items: center; gap: 8px; padding-top: 5px; background: #f7f6f4; }
.steps i { border: 4px solid transparent; }
.steps .s-up { border-bottom-color: #555; border-top: 0; }
.steps .s-dn { border-top-color: #555; border-bottom: 0; }
.spin + label[for=rot] { margin-left: 11px; width: 39px; }
.status .render { display: flex; align-items: center; gap: 6px; height: 29px; width: 80px; padding-left: 5px; }
.crs { gap: 4px; margin-left: 4px; }
.bubble { margin: 0 24px 0 auto; }
```
FILE: terrain.js
```js
// Aspect raster: noise smeared along a direction field, quantised to four greys.
(function () {
  var c = document.getElementById('terrain'), g = c.getContext('2d');
  var W = c.width, H = c.height, seed = 4711;
  function rnd() {
    seed = (seed + 0x6D2B79F5) | 0;
    var t = Math.imul(seed ^ (seed >>> 15), 1 | seed);
    t = (t + Math.imul(t ^ (t >>> 7), 61 | t)) ^ t;
    return ((t ^ (t >>> 14)) >>> 0) / 4294967296;
  }
  var flow = [[110,30,-60],[150,70,-20],[200,50,85],[180,100,-25],[130,90,95],[300,60,70],[270,120,75],[450,90,-40],
    [380,170,-35],[400,205,-12],[170,140,-10],[200,180,10],[200,260,20],[160,310,4],[250,330,45],[330,330,80],
    [180,370,20],[90,420,28],[140,405,40],[420,300,20],[480,200,70],[400,350,50],[480,430,50],[250,420,80],
    [200,430,30],[350,430,70],[300,230,-25],[340,270,50],[300,280,85]];
  var S = 3, gw = Math.ceil(W / S), gh = Math.ceil(H / S), ang = [];
  for (var j = 0; j < gh; j++) for (var i = 0; i < gw; i++) {
    var sx = 0, sy = 0;
    flow.forEach(function (p) {
      var dx = i * S - p[0], dy = j * S - p[1], w = 1 / (Math.pow(dx * dx + dy * dy, 1.5) + 300), a = p[2] * Math.PI / 90;
      sx += w * Math.cos(a); sy += w * Math.sin(a);
    });
    ang.push(Math.atan2(sy, sx) / 2);
  }
  function grid(cell) {
    var w = Math.ceil(W / cell) + 3, h = Math.ceil(H / cell) + 3, d = new Float32Array(w * h);
    for (var k = 0; k < d.length; k++) d[k] = rnd();
    return function (x, y) {
      x = Math.max(0, Math.min(W, x)) / cell; y = Math.max(0, Math.min(H, y)) / cell;
      var a = x | 0, b = y | 0, u = x - a, v = y - b, o = b * w + a;
      return (d[o] * (1 - u) + d[o + 1] * u) * (1 - v) + (d[o + w] * (1 - u) + d[o + w + 1] * u) * v;
    };
  }
  var fine = grid(1), mid = grid(2), wide = grid(16), warp = grid(16);
  var val = new Float32Array(W * H);
  for (var y = 0; y < H; y++) for (var x = 0; x < W; x++) {
    var a = ang[((y / S) | 0) * gw + ((x / S) | 0)] + (warp(x, y) - .5) * 1.5;
    var cx = Math.cos(a), cy = Math.sin(a), f = 0, m = 0;
    for (var t = -1; t <= 1; t++) f += fine(x + cx * t, y + cy * t);
    for (t = -2; t <= 2; t++) m += mid(x + cx * t * 2, y + cy * t * 2);
    val[y * W + x] = (f / 3 - .5) * .7 + (m / 5 - .5) * .9 + (wide(x, y) - .5) * .16 + (rnd() - .5) * .22;
  }
  var sorted = Float32Array.from(val).sort(), n = sorted.length;
  var q = [sorted[Math.floor(n * .27)], sorted[Math.floor(n * .48)], sorted[Math.floor(n * .73)]];
  var img = g.createImageData(W, H);
  for (var k = 0; k < n; k++) {
    var s = val[k] < q[0] ? 0 : val[k] < q[1] ? 68 : val[k] < q[2] ? 128 : 190;
    img.data[k * 4] = img.data[k * 4 + 1] = img.data[k * 4 + 2] = s; img.data[k * 4 + 3] = 255;
  }
  g.putImageData(img, 0, 0);
  function speckle(x0, y0, x1, y1, r, count, col) {
    g.fillStyle = col;
    for (var k = 0; k < count; k++) {
      var t = rnd(), b = (rnd() + rnd() - 1) * r, e = (rnd() + rnd() - 1) * r;
      g.fillRect(x0 + (x1 - x0) * t + b | 0, y0 + (y1 - y0) * t + e | 0, 2 + rnd() * 3, 1 + rnd() * 2);
    }
  }
  speckle(150, 192, 168, 198, 6, 50, '#bebebe');
  speckle(148, 196, 205, 210, 8, 190, '#000');
  speckle(128, 386, 168, 420, 8, 210, '#808080');
  speckle(306, 250, 346, 285, 5, 150, '#bebebe');
  speckle(346, 285, 352, 305, 4, 40, '#808080');
  speckle(312, 246, 390, 310, 4, 110, '#333');
  speckle(404, 184, 434, 182, 2, 50, '#000');
  speckle(90, 10, 130, 8, 9, 60, '#808080');
  speckle(340, 208, 410, 190, 5, 90, '#bebebe');
  speckle(185, 148, 220, 130, 4, 60, '#bebebe');
  speckle(122, 105, 150, 20, 4, 90, '#111');
  speckle(195, 30, 205, 85, 6, 90, '#111');
  speckle(275, 70, 285, 130, 6, 90, '#111');
  speckle(438, 110, 440, 160, 7, 90, '#111');
  var coast = [62,0,66,10,74,22,75,34,79,44,86,56,91,64,98,66,99,76,106,86,109,98,107,105,124,106,129,122,132,142,137,152,131,166,
    137,182,143,206,145,226,141,242,140,259,134,287,120,289,117,295,126,302,127,322,126,346,120,366,110,377,102,376,
    94,372,72,376,71,381,75,384,74,416,69,436,60,451];
  g.fillStyle = '#000'; g.beginPath(); g.moveTo(0, 0);
  for (k = 0; k < coast.length; k += 2) g.lineTo(coast[k] + (rnd() - .5) * 2, coast[k + 1]);
  g.lineTo(60, H); g.lineTo(0, H); g.fill();
  g.fillRect(0, 0, W, 2); g.fillRect(W - 3, 0, 3, H); g.fillRect(0, H - 4, W, 4);
  g.fillStyle = '#bebebe';
  [[117,291,8,1],[114,293,3,2],[112,298,2,2],[120,289,3,1],[65,451,30,1],[150,452,50,1],[265,453,30,1],[380,454,50,1]].forEach(function (r) {
    g.fillRect(r[0], r[1], r[2], r[3]);
  });
})();
```
